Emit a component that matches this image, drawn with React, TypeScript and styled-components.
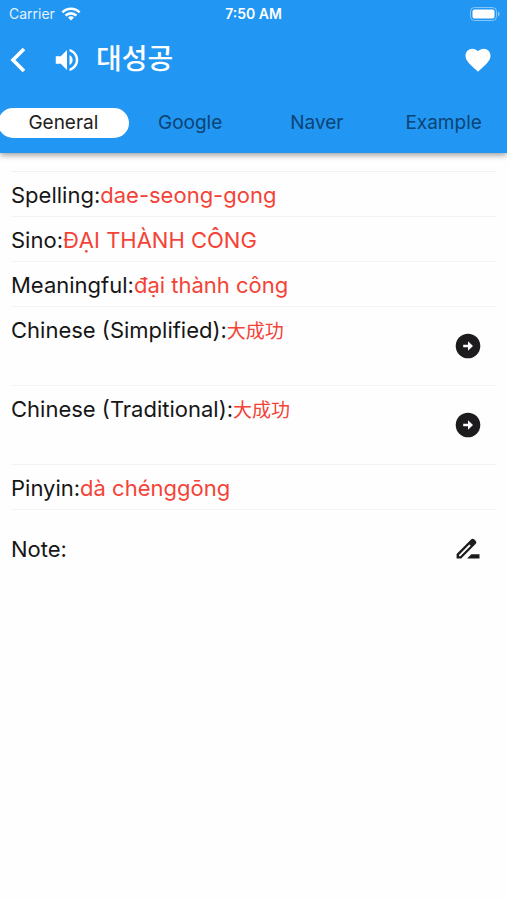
import React, { useState } from "react";
import styled, { createGlobalStyle } from "styled-components";
import { MdFavorite, MdVolumeUp } from "react-icons/md";

const GlobalStyle = createGlobalStyle`
  *, *::before, *::after { box-sizing: border-box; }
  body {
    margin: 0;
    background: #fefefe;
    color: #161616;
    font-family: Inter, "Noto Sans CJK SC", sans-serif;
  }
`;

const Page = styled.div`
  min-height: 100vh;
  overflow-x: hidden;
`;

const Header = styled.header`
  display: flex;
  flex-direction: column;
  padding-bottom: 15px;
  background: #2196f3;
  color: #fff;
  box-shadow: 0 2px 6px rgba(0, 0, 0, 0.4);
`;

const StatusBar = styled.div`
  display: grid;
  grid-template-columns: 1fr auto 1fr;
  align-items: center;
  height: 28px;
  padding: 0 7px;
  font-size: 14px;
  line-height: 20px;
`;

const Carrier = styled.span`
  display: flex;
  align-items: center;
  gap: 6px;
  padding-left: 2px;
  color: #e4f2fe;
`;

const Clock = styled.span`
  font-weight: 600;
`;

const BatterySlot = styled.span`
  display: flex;
  justify-content: flex-end;
`;

const Toolbar = styled.div`
  display: flex;
  align-items: center;
  height: 64px;
  padding: 0 14px 0 3px;
`;

const IconButton = styled.button`
  display: grid;
  place-items: center;
  flex: none;
  width: 30px;
  height: 32px;
  padding: 0;
  border: 0;
  background: none;
  color: inherit;
  cursor: pointer;

  svg {
    display: block;
  }
`;

const SpeakButton = styled(IconButton)`
  margin-left: 19px;
`;

const Title = styled.h1`
  flex: 1;
  margin: 0;
  padding: 0 0 6px 14px;
  font: 500 28px/36px "Noto Sans CJK KR", sans-serif;
`;

const Tabs = styled.nav`
  display: grid;
  grid-template-columns: repeat(4, 1fr);
  margin-top: 16px;
`;

const Tab = styled.button<{ $active: boolean }>`
  height: 30px;
  margin: 0 -2px;
  padding: 0;
  border: 0;
  border-radius: 15px;
  background: ${(p) => (p.$active ? "#fff" : "transparent")};
  color: ${(p) => (p.$active ? "#212121" : "#0c4474")};
  font: 400 19px/28px Inter, sans-serif;
  cursor: pointer;
`;

const Details = styled.main`
  padding: 18px 11px 0;
`;

const List = styled.dl`
  margin: 0;
  border-top: 1px solid #f1f1f1;
`;

const Row = styled.div<{ $tall?: boolean }>`
  display: flex;
  align-items: flex-start;
  height: ${(p) => (p.$tall ? 79 : 45)}px;
  padding-top: 8px;
  border-bottom: 1px solid #f3f3f3;
  font-size: 22px;
  line-height: 30px;
`;

const Label = styled.dt``;

const Value = styled.dd`
  flex: 1;
  margin: 0;
  color: #f44336;
`;

const Ideographs = styled.span`
  font: 400 19px/28px "Noto Sans CJK SC", sans-serif;
`;

const RowButton = styled(IconButton)`
  align-self: center;
  margin: -8px 13px 0 0;
  color: #1d1b1e;
`;

const Note = styled.section`
  display: flex;
  align-items: center;
  justify-content: space-between;
  height: 78px;
  font-size: 22px;
  line-height: 30px;
`;

const EditButton = styled(IconButton)`
  margin-right: 13px;
  color: #1d1b1e;
`;

const WifiIcon = () => (
  <svg width="20" height="14" viewBox="0 0 20 14" fill="none" stroke="#fff" strokeWidth="2.6">
    <path d="M1.4 5.3a12.2 12.2 0 0 1 17.2 0" />
    <path d="M4.6 8.6a7.6 7.6 0 0 1 10.8 0" />
    <path d="M10 13.6l-3-3a4.2 4.2 0 0 1 6 0z" fill="#fff" stroke="none" />
  </svg>
);

const BatteryIcon = () => (
  <svg width="30" height="14" viewBox="0 0 30 14">
    <rect x="0.5" y="0.5" width="26" height="13" rx="4" fill="none" stroke="#fff" strokeOpacity="0.45" />
    <rect x="2.5" y="2.5" width="22" height="9" rx="2" fill="#fff" />
    <path d="M28 4.5c2 .8 2 4.2 0 5z" fill="#fff" fillOpacity="0.5" />
  </svg>
);

const BackIcon = () => (
  <svg width="16" height="26" viewBox="0 0 16 26" fill="none" stroke="#fff" strokeWidth="3.6">
    <path d="M14 2L3 13l11 11" />
  </svg>
);

const ArrowCircleIcon = () => (
  <svg width="26" height="26" viewBox="0 0 26 26">
    <circle cx="13" cy="13" r="12.3" fill="currentColor" />
    <path d="M8.2 11.7H13V8.3l5 4.7-5 4.7v-3.4H8.2z" fill="#fff" />
  </svg>
);

const EditIcon = () => (
  <svg width="24" height="22" viewBox="0 0 24 22" fill="currentColor">
    <path
      fillRule="evenodd"
      d="M.6 15.9L15.300 1.300q1.400-1.200 2.800 0l1.700 1.700q1.200 1.400 0 2.800L5.200 20.500H.6zM3 16.900v1.300h1.300L14.700 7.800l-1.400-1.400z"
    />
    <path d="M15.300 16.300h8.200v4.200H11.100z" />
  </svg>
);

interface Entry {
  label: string;
  value: string;
  linked?: boolean;
}

const entries: Entry[] = [
  { label: "Spelling:", value: "dae-seong-gong" },
  { label: "Sino:", value: "ĐẠI THÀNH CÔNG" },
  { label: "Meaningful:", value: "đại thành công" },
  { label: "Chinese (Simplified):", value: "大成功", linked: true },
  { label: "Chinese (Traditional):", value: "大成功", linked: true },
  { label: "Pinyin:", value: "dà chénggōng" },
];

const tabs = ["General", "Google", "Naver", "Example"];

export default function App() {
  const [active, setActive] = useState("General");

  return (
    <Page>
      <GlobalStyle />
      <Header>
        <StatusBar>
          <Carrier>
            Carrier <WifiIcon />
          </Carrier>
          <Clock>7:50 AM</Clock>
          <BatterySlot>
            <BatteryIcon />
          </BatterySlot>
        </StatusBar>
        <Toolbar>
          <IconButton aria-label="Back">
            <BackIcon />
          </IconButton>
          <SpeakButton aria-label="Listen">
            <MdVolumeUp size={30} />
          </SpeakButton>
          <Title lang="ko">대성공</Title>
          <IconButton aria-label="Favorite">
            <MdFavorite size={30} />
          </IconButton>
        </Toolbar>
        <Tabs>
          {tabs.map((tab) => (
            <Tab key={tab} $active={tab === active} onClick={() => setActive(tab)}>
              {tab}
            </Tab>
          ))}
        </Tabs>
      </Header>
      <Details>
        <List>
          {entries.map(({ label, value, linked }) => (
            <Row key={label} $tall={linked}>
              <Label>{label}</Label>
              <Value>{linked ? <Ideographs lang="zh">{value}</Ideographs> : value}</Value>
              {linked && (
                <RowButton aria-label={`Open ${label}`}>
                  <ArrowCircleIcon />
                </RowButton>
              )}
            </Row>
          ))}
        </List>
        <Note>
          <span>Note:</span>
          <EditButton aria-label="Edit note">
            <EditIcon />
          </EditButton>
        </Note>
      </Details>
    </Page>
  );
}
